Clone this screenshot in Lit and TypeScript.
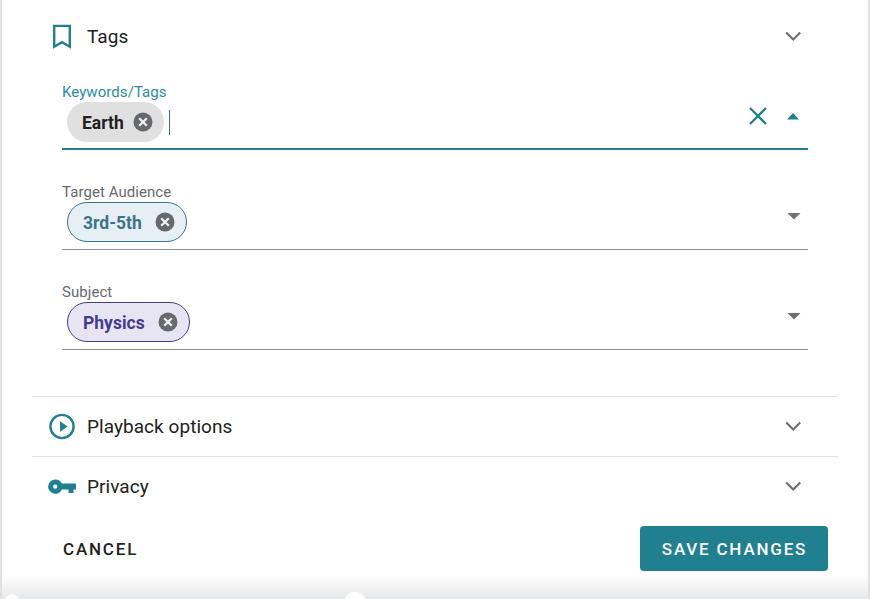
import { LitElement, html, css } from "lit";
import { customElement } from "lit/decorators.js";

const chevron = html`<svg class="chev" width="24" height="24" viewBox="0 0 24 24"><path d="M5.200 8.500l7 7 7-7" fill="none" stroke="#6b6f73" stroke-width="2.100"/></svg>`;
const xCircle = html`<svg class="x" width="20" height="20" viewBox="0 0 20 20"><circle cx="10" cy="10" r="9.500" fill="#68696c"/><path d="M6.200 6.200l7.600 7.600M13.800 6.200l-7.600 7.600" stroke="#eef0f2" stroke-width="2.300" fill="none"/></svg>`;
const caret = html`<svg class="caret down" width="14" height="8" viewBox="0 0 14 8"><path d="M0.500 1h13L7 7.500z" fill="#6f7073"/></svg>`;

@customElement("app-root")
export class AppRoot extends LitElement {
  static styles = css`
    :host { display: block; width: 870px; height: 599px; position: relative; overflow: hidden; background: #fff; font-family: Roboto, sans-serif; color: #212121; }
    .frame { box-sizing: border-box; height: 599px; border-left: 2px solid #dfe1e3; border-right: 2px solid #dfe1e3; padding: 0 30px; }
    .head { height: 72px; display: flex; align-items: center; font-size: 19px; }
    .ico { width: 39px; padding-left: 16px; flex: none; display: flex; align-items: center; }
    .title { flex: 1; letter-spacing: 0.05px; }
    .chev { margin-right: 33px; flex: none; }
    .body { padding: 0 30px; height: 324px; box-sizing: border-box; }
    .field { box-sizing: border-box; }
    .f1 { height: 78px; border-bottom: 2px solid #20808f; padding-top: 11px; }
    .f2, .f3 { height: 100px; border-bottom: 1px solid #8f9193; padding-top: 33px; }
    label { display: block; font-size: 15px; line-height: 18px; color: #66696d; letter-spacing: 0.06px; }
    .f1 label { color: #2a8ca0; }
    .row { display: flex; align-items: center; padding-left: 5px; margin-top: 1px; height: 40px; }
    .chip { box-sizing: border-box; height: 40px; border-radius: 20px; display: flex; align-items: center; font-size: 17.500px; font-weight: 700; padding: 0 11px 0 15px; }
    .chip span { margin-top: 2px; }
    .x { flex: none; }
    .earth { background: #e0e0e0; color: #212121; }
    .earth .x { margin-left: 9px; }
    .grade { background: #e5eff4; border: 1px solid #3b7488; color: #3b7488; }
    .grade .x { margin-left: 13px; }
    .phys { background: #e8e5f3; border: 1px solid #453b8f; color: #453b8f; }
    .phys .x { margin-left: 13px; }
    .cursor { width: 1px; height: 25px; background: #3a6f80; margin-left: 5px; }
    .spacer { flex: 1; }
    .clear { margin-right: 18px; margin-bottom: 12px; }
    .caret { margin-right: 8px; margin-bottom: 12px; }
    .caret.down { margin-right: 7px; margin-bottom: 13px; }
    .sec { border-top: 1px solid #e1e2e4; height: 60px; box-sizing: border-box; display: flex; align-items: center; font-size: 19px; }
    .sec .chev { margin-bottom: 1px; }
    .sec .title { margin-bottom: 1px; }
    .foot { display: flex; align-items: center; justify-content: space-between; height: 45px; padding: 0 10px 0 31px; margin-top: 10px; }
    .cancel { font-size: 17px; font-weight: 500; letter-spacing: 1.800px; color: #212121; }
    .save { box-sizing: border-box; width: 188px; height: 45px; padding-left: 1px; background: #20808f; color: #fff; border-radius: 4px; display: flex; align-items: center; justify-content: center; font-size: 17px; font-weight: 500; letter-spacing: 1.800px; }
    .shade { position: absolute; left: 2px; right: 2px; bottom: 0; height: 24px; background: linear-gradient(to bottom, rgba(232,233,234,0), #e7e8e9); }
    .bump { position: absolute; background: #fff; }
    .b1 { left: 344px; top: 592px; width: 22px; height: 22px; border-radius: 50%; }
    .b2 { left: 4px; top: 593px; width: 16px; height: 6px; clip-path: polygon(50% 0, 100% 100%, 0 100%); }
  `;

  render() {
    return html`
      <div class="frame">
        <div class="head">
          <span class="ico"><svg width="24" height="28" viewBox="0 0 24 28"><path d="M6.200 3.900h15.600v20.800L14 20.100 6.200 24.700z" fill="none" stroke="#20808f" stroke-width="2.400"/></svg></span>
          <span class="title">Tags</span>
          ${chevron}
        </div>
        <div class="body">
          <div class="field f1">
            <label>Keywords/Tags</label>
            <div class="row">
              <div class="chip earth"><span>Earth</span>${xCircle}</div>
              <span class="cursor"></span>
              <span class="spacer"></span>
              <svg class="clear" width="20" height="20" viewBox="0 0 20 20"><path d="M2 2l16 16M18 2L2 18" stroke="#20808f" stroke-width="2.300" fill="none"/></svg>
              <svg class="caret" width="14" height="8" viewBox="0 0 14 8"><path d="M1 7.500h12L7 1z" fill="#20808f"/></svg>
            </div>
          </div>
          <div class="field f2">
            <label>Target Audience</label>
            <div class="row"><div class="chip grade"><span>3rd-5th</span>${xCircle}</div><span class="spacer"></span>${caret}</div>
          </div>
          <div class="field f3">
            <label>Subject</label>
            <div class="row"><div class="chip phys"><span>Physics</span>${xCircle}</div><span class="spacer"></span>${caret}</div>
          </div>
        </div>
        <div class="sec">
          <span class="ico"><svg width="28" height="28" viewBox="0 0 28 28"><circle cx="14" cy="13.500" r="11.600" fill="none" stroke="#20808f" stroke-width="2.400"/><path d="M12 8.300v10.400l7.700-5.200z" fill="#20808f"/></svg></span>
          <span class="title">Playback options</span>
          ${chevron}
        </div>
        <div class="sec">
          <span class="ico"><svg width="28" height="16" viewBox="0 0 28 16"><path fill="#20808f" fill-rule="evenodd" d="M7.200 0.400a7.200 7.200 0 0 1 6.700 4H28v6.200h-2.500v3.400h-5v-3.400h-6.600A7.200 7.200 0 1 1 7.200 0.400zm0 5.200a2.100 2.100 0 1 0 0 4.200 2.100 2.100 0 0 0 0-4.200z"/></svg></span>
          <span class="title">Privacy</span>
          ${chevron}
        </div>
        <div class="foot">
          <span class="cancel">CANCEL</span>
          <span class="save">SAVE CHANGES</span>
        </div>
      </div>
      <div class="shade"></div>
      <div class="bump b1"></div>
      <div class="bump b2"></div>
    `;
  }
}
